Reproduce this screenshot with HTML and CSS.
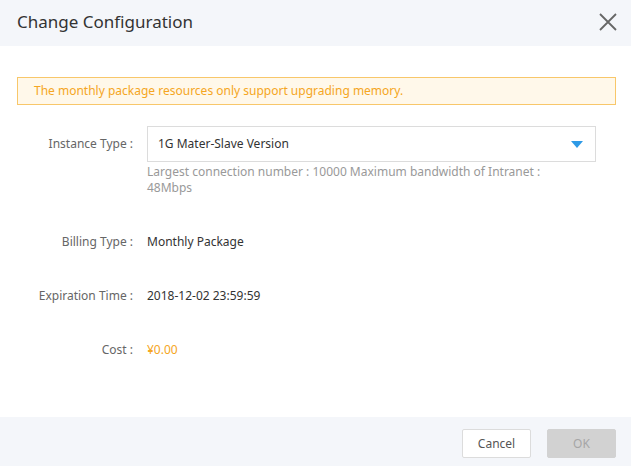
FILE: index.html
```html
<!DOCTYPE html>
<html>
<head>
<meta charset="utf-8">
<link rel="stylesheet" href="styles.css">
</head>
<body>
<div class="dialog">
  <div class="header">
    <div class="title">Change Configuration</div>
    <svg class="close" width="18" height="18" viewBox="0 0 18 18"><path d="M1 1L17 17M17 1L1 17" stroke="#666" stroke-width="1.8" fill="none"/></svg>
  </div>
  <div class="content">
    <div class="alert">The monthly package resources only support upgrading memory.</div>
    <div class="form">
      <div class="row row-select">
        <div class="label">Instance Type :</div>
        <div class="field">
          <div class="select">
            <span>1G Mater-Slave Version</span>
            <svg class="caret" width="12" height="7" viewBox="0 0 12 7"><path d="M0 0H12L6 7Z" fill="#2e9ae6"/></svg>
          </div>
          <div class="help">Largest connection number : 10000 Maximum bandwidth of Intranet : 48Mbps</div>
        </div>
      </div>
      <div class="row first">
        <div class="label">Billing Type :</div>
        <div class="value">Monthly Package</div>
      </div>
      <div class="row">
        <div class="label">Expiration Time :</div>
        <div class="value">2018-12-02 23:59:59</div>
      </div>
      <div class="row">
        <div class="label">Cost :</div>
        <div class="value cost">¥0.00</div>
      </div>
    </div>
  </div>
  <div class="footer">
    <button class="btn cancel">Cancel</button>
    <button class="btn ok">OK</button>
  </div>
</div>
</body>
</html>
```

FILE: styles.css
```css
* { box-sizing: border-box; }
html, body { margin: 0; padding: 0; background: #fff; }
body {
  font-family: "Noto Sans", "Open Sans", "Liberation Sans", sans-serif;
  font-size: 12px;
  color: #333;
}
.dialog {
  width: 631px;
  height: 466px;
  display: flex;
  flex-direction: column;
}
.header {
  height: 46px;
  background: #f4f6fa;
  display: flex;
  align-items: center;
  justify-content: space-between;
  padding: 0 14px 0 17px;
}
.title {
  font-size: 17px;
  color: #333;
  margin-top: -4px;
}
.close { display: block; margin-top: -3px; }
.content {
  flex: 1;
  padding: 31px 15px 0 17px;
}
.alert {
  height: 28px;
  border: 1px solid #f8c76a;
  background: #fff8ea;
  color: #f5a623;
  padding-left: 16px;
  line-height: 26px;
  font-size: 12px;
}
.form {
  margin-top: 21px;
  display: flex;
  flex-direction: column;
}
.row {
  display: flex;
  align-items: center;
  line-height: 20px;
  margin-top: 34px;
}
.row.first { margin-top: 36px; }
.row-select { align-items: flex-start; margin-top: 0; }
.label {
  width: 116px;
  text-align: right;
  color: #666;
  margin-right: 14px;
  flex: none;
}
.row-select .label { line-height: 36px; }
.field { width: 449px; }
.select {
  height: 36px;
  border: 1px solid #dcdcdc;
  display: flex;
  align-items: center;
  justify-content: space-between;
  padding: 0 12px 0 10px;
  color: #333;
}
.caret { display: block; }
.help {
  margin-top: 2px;
  color: #999;
  line-height: 16px;
  width: 420px;
}
.value { color: #333; }
.cost { color: #f5a623; }
.footer {
  height: 49px;
  background: #f4f6fa;
  display: flex;
  justify-content: flex-end;
  align-items: flex-start;
  padding: 12px 15px 0 0;
  gap: 16px;
}
.btn {
  width: 69px;
  height: 29px;
  font-family: inherit;
  font-size: 12px;
  border-radius: 2px;
  padding: 0;
}
.cancel {
  background: #fff;
  border: 1px solid #dcdcdc;
  color: #555;
}
.ok {
  background: #d2d2d2;
  border: 1px solid #d2d2d2;
  color: #a6a6a6;
}
```
